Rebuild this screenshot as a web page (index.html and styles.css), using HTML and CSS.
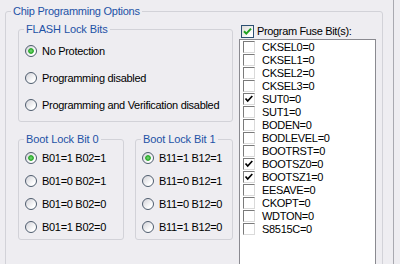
FILE: index.html
```html
<!DOCTYPE html>
<html lang="en">
<head>
  <meta charset="UTF-8" />
  <title>Chip Programming Options</title>
  <link rel="stylesheet" href="styles.css">
</head>
<body>

  <div class="page">
    <fieldset class="group options">
      <legend>Chip Programming Options</legend>
      <div class="options-body">

        <div class="left-col">
          <fieldset class="group flash">
            <legend>FLASH Lock Bits</legend>
            <label class="radio-row"><span class="radio checked"></span>No Protection</label>
            <label class="radio-row"><span class="radio"></span>Programming disabled</label>
            <label class="radio-row"><span class="radio"></span>Programming and Verification disabled</label>
          </fieldset>

          <div class="boot-row">
            <fieldset class="group boot boot0">
              <legend>Boot Lock Bit 0</legend>
              <label class="radio-row"><span class="radio checked"></span>B01=1 B02=1</label>
              <label class="radio-row"><span class="radio"></span>B01=0 B02=1</label>
              <label class="radio-row"><span class="radio"></span>B01=0 B02=0</label>
              <label class="radio-row"><span class="radio"></span>B01=1 B02=0</label>
            </fieldset>
            <fieldset class="group boot boot1">
              <legend>Boot Lock Bit 1</legend>
              <label class="radio-row"><span class="radio checked"></span>B11=1 B12=1</label>
              <label class="radio-row"><span class="radio"></span>B11=0 B12=1</label>
              <label class="radio-row"><span class="radio"></span>B11=0 B12=0</label>
              <label class="radio-row"><span class="radio"></span>B11=1 B12=0</label>
            </fieldset>
          </div>
        </div>

        <div class="right-col">
          <label class="fuse-toggle">
            <span class="xp-check">
              <svg width="11" height="11" viewBox="0 0 11 11"><path d="M2 5.2 L4.3 7.6 L9 2.6" fill="none" stroke="#21a121" stroke-width="2"/></svg>
            </span>
            Program Fuse Bit(s):
          </label>
          <ul class="fuse-list">
            <li><span class="box"></span>CKSEL0=0</li>
            <li><span class="box"></span>CKSEL1=0</li>
            <li><span class="box"></span>CKSEL2=0</li>
            <li><span class="box"></span>CKSEL3=0</li>
            <li><span class="box"><svg width="10" height="10" viewBox="0 0 10 10"><path d="M1.5 4.5 L3.7 7 L8.3 2" fill="none" stroke="#000" stroke-width="1.7"/></svg></span>SUT0=0</li>
            <li><span class="box"></span>SUT1=0</li>
            <li><span class="box"></span>BODEN=0</li>
            <li><span class="box"></span>BODLEVEL=0</li>
            <li><span class="box"></span>BOOTRST=0</li>
            <li><span class="box"><svg width="10" height="10" viewBox="0 0 10 10"><path d="M1.5 4.5 L3.7 7 L8.3 2" fill="none" stroke="#000" stroke-width="1.7"/></svg></span>BOOTSZ0=0</li>
            <li><span class="box"><svg width="10" height="10" viewBox="0 0 10 10"><path d="M1.5 4.5 L3.7 7 L8.3 2" fill="none" stroke="#000" stroke-width="1.7"/></svg></span>BOOTSZ1=0</li>
            <li><span class="box"></span>EESAVE=0</li>
            <li><span class="box"></span>CKOPT=0</li>
            <li><span class="box"></span>WDTON=0</li>
            <li><span class="box"></span>S8515C=0</li>
          </ul>
        </div>

      </div>
    </fieldset>
    <div class="frame-edge"></div>
  </div>

</body>
</html>
```

FILE: styles.css
```css
* {
  box-sizing: border-box;
}

body {
  margin: 0;
  font-family: "Liberation Sans", Arial, sans-serif;
  font-size: 11px;
  color: #000;
  background: #eeedf1;
  overflow: hidden;
}

.page {
  display: flex;
  height: 264px;
  overflow: hidden;
}

/* group boxes */
.group {
  margin: 0;
  min-width: 0;
  border: 1px solid #d2d2d8;
  border-radius: 3px;
}

.group legend {
  padding: 0 2px;
  line-height: 13px;
  color: #1d52a6;
  letter-spacing: -0.1px;
}

.options {
  flex: none;
  width: 378px;
  height: 290px;
  margin: 5px 0 0 5px;
  padding: 5px 6px 0 12px;
}

.options > legend {
  margin-left: -7px;
  letter-spacing: -0.25px;
}

.options-body {
  display: flex;
  gap: 6px;
}

.left-col {
  flex: none;
  width: 215px;
}

.flash {
  padding: 1px 6px 3px 6px;
}

.flash legend,
.boot legend {
  margin-left: -1px;
}

.boot-row {
  display: flex;
  gap: 11px;
  margin-top: 11px;
}

.boot {
  padding: 0 6px 1px 6px;
}

.boot0 {
  flex: none;
  width: 106px;
}

.boot1 {
  flex: 1;
}

/* radio buttons */
.radio-row {
  display: flex;
  align-items: center;
  gap: 5px;
  height: 27px;
  letter-spacing: -0.3px;
  white-space: nowrap;
}

.boot .radio-row {
  height: 23px;
}

.radio {
  flex: none;
  width: 12px;
  height: 12px;
  border: 1px solid #4f5d6e;
  border-radius: 50%;
  background: linear-gradient(135deg, #d2d2d8, #ffffff 75%);
}

.radio.checked {
  background:
    radial-gradient(circle, #7fdc7f 0, #23a623 2.4px, transparent 3.2px),
    linear-gradient(135deg, #d2d2d8, #ffffff 75%);
}

/* fuse bits */
.right-col {
  flex: none;
  width: 137px;
}

.fuse-toggle {
  display: flex;
  align-items: center;
  gap: 3px;
  height: 16px;
  margin-left: 2px;
  letter-spacing: -0.35px;
}

.xp-check {
  flex: none;
  display: flex;
  align-items: center;
  justify-content: center;
  width: 13px;
  height: 13px;
  border: 1px solid #2c4f72;
  background: linear-gradient(135deg, #dcdcd7, #ffffff 80%);
}

.fuse-list {
  list-style: none;
  margin: 0;
  padding: 1px 0 0 0;
  height: 240px;
  background: #fff;
  border: 1px solid #8a8a90;
}

.fuse-list li {
  display: flex;
  align-items: flex-start;
  height: 13px;
  line-height: 13px;
  letter-spacing: -0.3px;
}

.box {
  flex: none;
  display: flex;
  align-items: center;
  justify-content: center;
  width: 12px;
  height: 12px;
  margin: 0 7px 0 3px;
  border: 1px solid #dadada;
  border-top-color: #7a7a7a;
  border-left-color: #7a7a7a;
  background: #fff;
}

.frame-edge {
  flex: none;
  width: 1px;
  height: 264px;
  margin-left: 10px;
  background: #a9a9b0;
}
```
